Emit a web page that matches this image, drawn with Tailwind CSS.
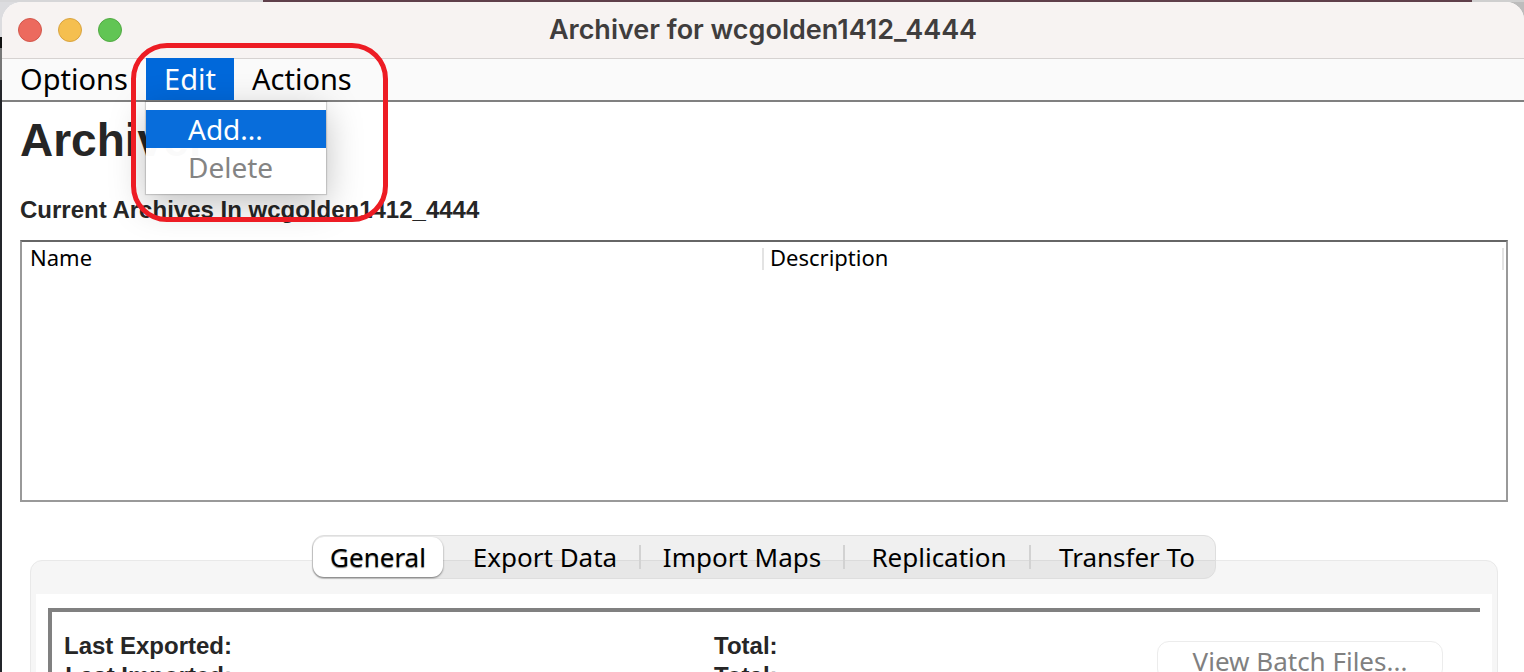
<!DOCTYPE html>
<html lang="en">
<head>
<meta charset="utf-8">
<title>Archiver for wcgolden1412_4444</title>
<script src="https://cdn.jsdelivr.net/npm/@tailwindcss/browser@4"></script>
</head>
<body class="flex h-screen flex-col overflow-hidden bg-[linear-gradient(#dcdcdf_0_37px,#111_37px_48px,#777_48px_80px,#23252a_80px)] font-['Noto_Sans',sans-serif] text-black">
  <!-- Desktop strip visible above the window -->
  <div class="flex h-[2px] shrink-0" aria-hidden="true">
    <div class="w-[263px] bg-[#d6d6d8]"></div>
    <div class="grow bg-[#5f3f4a]"></div>
    <div class="w-[52px] bg-[#cfcfcf]"></div>
  </div>
  <div class="flex min-h-0 grow bg-[linear-gradient(90deg,transparent_50%,#bdbcbc_50%)]">
  <main class="relative ml-[2px] min-w-0 grow overflow-hidden rounded-tl-[20px] rounded-tr-[18px] bg-white">
    <header class="relative flex h-[56px] items-center justify-center bg-[#f7f3f2]">
      <div class="absolute left-4 flex gap-4">
        <button aria-label="Close" class="size-6 rounded-full border border-[#d2574c] bg-[#ec6a5e]"></button>
        <button aria-label="Minimize" class="size-6 rounded-full border border-[#d8a340] bg-[#f5bf4f]"></button>
        <button aria-label="Zoom" class="size-6 rounded-full border border-[#52a943] bg-[#61c554]"></button>
      </div>
      <h1 class="font-[Inter,sans-serif] text-[27px] leading-[54px] font-semibold text-[#403d3d]">Archiver for wcgolden1412_4444</h1>
    </header>

    <nav class="relative z-10 flex h-[44px] border-b-2 border-[#808080] bg-[#fafafa] text-[29px] leading-[42px] shadow-[inset_0_1px_0_#d6d2d1]">
      <button class="w-[144px] pl-[18px] text-left">Options</button>
      <div class="relative">
        <button class="w-[88px] bg-[#0068da] text-center text-white" aria-expanded="true">Edit</button>
        <div role="menu" class="absolute top-[44px] left-0 flex w-[180px] flex-col bg-white/98 py-2 text-[28px] shadow-[0_0_1px_1px_#00000026,0_10px_36px_#00000040]">
          <button role="menuitem" class="h-[38px] bg-[#0068da]/97 pl-[42px] text-left leading-[38px] text-white">Add...</button>
          <button role="menuitem" disabled class="h-[38px] pl-[42px] text-left leading-[38px] text-[#848484]">Delete</button>
        </div>
      </div>
      <button class="px-[18px]">Actions</button>
    </nav>

    <section class="px-[18px] font-['Liberation_Sans',sans-serif] font-bold text-[#262626]">
      <h2 class="pt-2 text-[46px] leading-[60px]">Archiver</h2>
      <h3 class="mt-[24px] text-[24px] leading-[32px]">Current Archives In wcgolden1412_4444</h3>
    </section>

    <div class="mt-[14px] mr-4 ml-[18px] h-[262px] border-2 border-[#999] border-t-[#666]">
      <table class="w-full table-fixed border-collapse text-[22px] leading-[18px]">
        <thead>
          <tr>
            <th class="p-0 pt-[6px] text-left font-normal"><div class="border-r-2 border-[#e3e3e3] pb-1 pl-2">Name</div></th>
            <th class="p-0 pt-[6px] pr-[2px] text-left font-normal"><div class="border-r-2 border-[#e3e3e3] pb-1 pl-[6px]">Description</div></th>
          </tr>
        </thead>
      </table>
    </div>

    <div class="mt-[33px] mr-[26px] ml-[28px]">
      <div role="tablist" class="relative z-[1] mx-auto -mb-[19px] flex h-[44px] w-fit items-center rounded-[12px] border border-[#dedede] bg-black/6 text-[26px] leading-[38px]">
        <button role="tab" aria-selected="true" class="h-[40px] w-[130px] rounded-[11px] bg-white text-center leading-[38px] shadow-[0_1px_2px_#00000080] [text-shadow:0_1px_1px_#00000080]">General</button>
        <button role="tab" class="w-[196px] pl-[8px] text-center">Export Data</button>
        <span class="h-6 w-[2px] bg-[#d2d2d2]"></span>
        <button role="tab" class="w-[202px] text-center">Import Maps</button>
        <span class="h-6 w-[2px] bg-[#d2d2d2]"></span>
        <button role="tab" class="w-[184px] pl-[4px] text-center">Replication</button>
        <span class="h-6 w-[2px] bg-[#d2d2d2]"></span>
        <button role="tab" class="w-[184px] pl-[8px] text-center">Transfer To</button>
      </div>
      <div class="rounded-t-[12px] border border-[#e9e9e9] bg-[#f6f6f6] px-[5px] pt-[33px]">
        <div role="tabpanel" class="bg-white pt-[14px] pr-[12px] pl-[12px]">
          <div class="flex h-[160px] border-t-4 border-l-4 border-[#808080] pt-[19px] pr-[37px] pl-3 font-['Liberation_Sans',sans-serif] text-[24px] leading-[30px] font-bold text-[#262626]">
            <dl class="w-[168px] shrink-0 text-right whitespace-nowrap">
              <dt>Last Exported:</dt>
              <dt>Last Imported:</dt>
            </dl>
            <dl class="ml-[482px]">
              <dt>Total:</dt>
              <dt>Total:</dt>
            </dl>
            <button disabled class="mt-[10px] ml-auto h-[40px] w-[286px] rounded-[12px] border border-[#ececec] bg-white font-['Noto_Sans',sans-serif] text-[26px] leading-[38px] font-normal text-[#808080]">View Batch Files...</button>
          </div>
        </div>
      </div>
    </div>

    <!-- Highlight ring around the Edit menu -->
    <div aria-hidden="true" class="pointer-events-none absolute top-[41px] left-[129px] z-20 h-[179px] w-[257px] rounded-[36px] border-[5px] border-[#ed1c24]"></div>
  </main>
  </div>
</body>
</html>
